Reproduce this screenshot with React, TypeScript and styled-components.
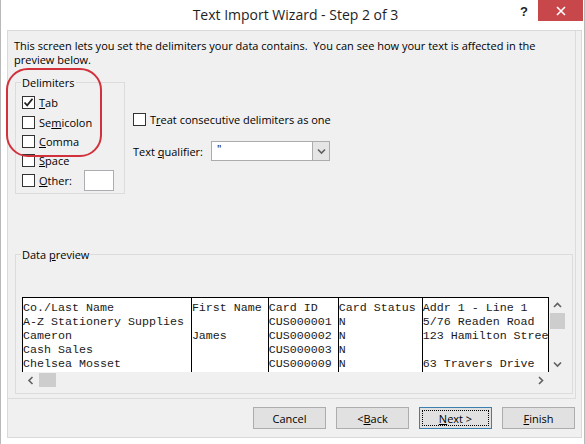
import React from 'react';
import styled, { createGlobalStyle } from 'styled-components';

const GlobalStyle = createGlobalStyle`
  html, body {
    margin: 0;
    padding: 0;
    background: #ffffff;
  }
  body {
    font-family: "Segoe UI", "Open Sans", sans-serif;
    font-size: 11px;
    color: #000000;
  }
`;

const Window = styled.div`
  width: 585px;
  height: 444px;
  box-sizing: border-box;
  display: flex;
  flex-direction: column;
  background: #ffffff;
  border-left: 1px solid #b9b9b9;
  border-right: 1px solid #b9b9b9;
`;

const TitleBar = styled.div`
  flex: none;
  height: 30px;
  display: grid;
  grid-template-columns: 1fr auto 1fr;
`;

const Title = styled.div`
  grid-column: 2;
  padding-left: 6px;
  font-size: 14px;
  line-height: 30px;
  color: #1e1e1e;
`;

const Controls = styled.div`
  grid-column: 3;
  justify-self: end;
  display: flex;
  align-items: flex-start;
  margin-right: 1px;
`;

const HelpButton = styled.div`
  width: 28px;
  height: 21px;
  font-family: "Liberation Sans", sans-serif;
  font-size: 13px;
  font-weight: bold;
  line-height: 24px;
  text-align: center;
  color: #1e1e1e;
`;

const CloseButton = styled.div`
  width: 45px;
  height: 21px;
  display: flex;
  align-items: center;
  justify-content: center;
  background: #c7474b;
`;

const Body = styled.div`
  flex: 1;
  margin: 0 2px 6px 6px;
  display: flex;
  flex-direction: column;
  background: #f0f0f0;
  border: 1px solid #d9d9d9;
`;

const Panel = styled.div`
  position: relative;
  flex: 1;
  display: flex;
  flex-direction: column;
  margin-right: 5px;
  border-right: 1px solid #dcdcdc;
  border-bottom: 1px solid #dcdcdc;
`;

const Intro = styled.p`
  margin: 0;
  padding: 8px 6px 0 6px;
  line-height: 14px;
`;

const OptionsRow = styled.div`
  display: flex;
  align-items: flex-start;
  margin-top: 8px;
  padding-left: 7px;
`;

const Group = styled.fieldset<{ $width: number; $height?: number }>`
  box-sizing: border-box;
  width: ${p => p.$width}px;
  height: ${p => (p.$height ? `${p.$height}px` : 'auto')};
  margin: 0;
  padding: 0 0 0 6px;
  border: 1px solid #dcdcdc;
`;

const GroupLabel = styled.legend`
  padding: 0 1px;
  margin-left: -1px;
  line-height: 15px;
`;

const CheckList = styled.div`
  display: flex;
  flex-direction: column;
  padding-top: 3px;
`;

const CheckRow = styled.label<{ $height?: number }>`
  display: flex;
  align-items: center;
  gap: 4px;
  height: ${p => p.$height ?? 19}px;
`;

const Box = styled.span`
  box-sizing: border-box;
  flex: none;
  width: 13px;
  height: 13px;
  display: flex;
  align-items: center;
  justify-content: center;
  background: #ffffff;
  border: 1px solid #333333;
`;

const OtherLabel = styled.span`
  width: 41px;
`;

const SmallInput = styled.div`
  box-sizing: border-box;
  width: 30px;
  height: 21px;
  background: #ffffff;
  border: 1px solid #abadb3;
`;

const SideColumn = styled.div`
  display: flex;
  flex-direction: column;
  margin-left: 8px;
  padding-top: 35px;
`;

const QualifierRow = styled.div`
  display: flex;
  align-items: center;
  margin-top: 12px;
`;

const QualifierLabel = styled.span`
  width: 78px;
`;

const Combo = styled.div`
  box-sizing: border-box;
  width: 119px;
  height: 20px;
  display: flex;
  background: #ffffff;
  border: 1px solid #acacac;
`;

const ComboValue = styled.span`
  flex: 1;
  padding-left: 5px;
  line-height: 14px;
`;

const ComboButton = styled.span`
  width: 16px;
  display: flex;
  align-items: center;
  justify-content: center;
  background: #e5e5e5;
  border-left: 1px solid #acacac;
`;

const PreviewGroup = styled(Group)`
  margin: auto 0 4px 7px;
  padding: 35px 0 5px 6px;
`;

const Preview = styled.div`
  display: grid;
  grid-template-columns: 527px 17px;
  grid-template-rows: 75px 16px;
`;

const Sheet = styled.div`
  display: flex;
  overflow: hidden;
  background: #ffffff;
  border: 1px solid #000000;
  border-bottom: none;
  font-family: "Liberation Mono", "Courier New", monospace;
  font-size: 11.66px;
  line-height: 14px;
  color: #1a1a1a;
`;

const SheetColumn = styled.div<{ $chars?: number; $first?: boolean }>`
  box-sizing: border-box;
  flex: ${p => (p.$chars ? 'none' : '1')};
  width: ${p => (p.$chars ? `${p.$chars}ch` : 'auto')};
  padding-top: 3px;
  white-space: pre;
  overflow: hidden;
  border-left: ${p => (p.$first ? 'none' : '1px solid #000000')};
`;

const VScroll = styled.div`
  display: flex;
  flex-direction: column;
  align-items: center;
  background: #f0f0f0;
`;

const HScroll = styled.div`
  display: flex;
  align-items: center;
  background: #f0f0f0;
`;

const ArrowCell = styled.div`
  flex: none;
  width: 17px;
  height: 16px;
  display: flex;
  align-items: center;
  justify-content: center;
`;

const VThumb = styled.div`
  width: 15px;
  height: 16px;
  background: #cdcdcd;
`;

const HThumb = styled.div`
  width: 17px;
  height: 14px;
  background: #cdcdcd;
`;

const Spacer = styled.div`
  flex: 1;
`;

const ButtonBar = styled.div`
  flex: none;
  height: 38px;
  box-sizing: border-box;
  display: flex;
  justify-content: flex-end;
  align-items: flex-start;
  gap: 10px;
  padding: 8px 6px 0 0;
`;

const Button = styled.div<{ $default?: boolean }>`
  position: relative;
  box-sizing: border-box;
  width: 73px;
  height: 22px;
  display: flex;
  align-items: center;
  justify-content: center;
  background: #e1e1e1;
  border: 1px solid ${p => (p.$default ? '#3c7fb1' : '#adadad')};

  ${p =>
    p.$default &&
    `
    &::after {
      content: '';
      position: absolute;
      inset: 2px;
      border: 1px dotted #000000;
    }
  `}
`;

/* red marker ring drawn over the delimiter checkboxes */
const Highlight = styled.div`
  position: absolute;
  left: -2px;
  top: 37px;
  width: 96px;
  height: 89px;
  box-sizing: border-box;
  border: 2px solid #d0313b;
  border-radius: 22px;
  pointer-events: none;
`;

const Chevron: React.FC<{ dir: 'up' | 'down' | 'left' | 'right' }> = ({ dir }) => {
  const pts = {
    up: '1,5 4.5,1.5 8,5',
    down: '1,1.5 4.5,5 8,1.5',
    left: '5.5,1 2,4.5 5.5,8',
    right: '2,1 5.5,4.5 2,8',
  }[dir];
  const wide = dir === 'up' || dir === 'down';
  return (
    <svg width={wide ? 9 : 7} height={wide ? 7 : 9} viewBox={wide ? '0 0 9 7' : '0 0 7 9'}>
      <polyline points={pts} fill="none" stroke="#606060" strokeWidth="1.6" />
    </svg>
  );
};

const Check: React.FC<{ checked?: boolean }> = ({ checked }) => (
  <Box>
    {checked && (
      <svg width="11" height="11" viewBox="0 0 11 11">
        <path d="M1.5 5.5 L4.2 8.3 L9.5 1.8" fill="none" stroke="#222222" strokeWidth="1.8" />
      </svg>
    )}
  </Box>
);

const columns: { chars?: number; lines: string[] }[] = [
  { chars: 24, lines: ['Co./Last Name', 'A-Z Stationery Supplies', 'Cameron', 'Cash Sales', 'Chelsea Mosset'] },
  { chars: 11, lines: ['First Name', '', 'James', '', ''] },
  { chars: 10, lines: ['Card ID', 'CUS000001', 'CUS000002', 'CUS000003', 'CUS000009'] },
  { chars: 12, lines: ['Card Status', 'N', 'N', 'N', 'N'] },
  { lines: ['Addr 1 - Line 1', '5/76 Readen Road', '123 Hamilton Street', '', '63 Travers Drive'] },
];

export default function App() {
  return (
    <>
      <GlobalStyle />
      <Window>
        <TitleBar>
          <Title>Text Import Wizard - Step 2 of 3</Title>
          <Controls>
            <HelpButton>?</HelpButton>
            <CloseButton>
              <svg width="10" height="10" viewBox="0 0 10 10">
                <path d="M1 1 L9 9 M9 1 L1 9" stroke="#ffffff" strokeWidth="1.6" />
              </svg>
            </CloseButton>
          </Controls>
        </TitleBar>

        <Body>
          <Panel>
            <Intro>
              This screen lets you set the delimiters your data contains.&nbsp; You can see how your text is affected in the
              preview below.
            </Intro>

            <OptionsRow>
              <Group $width={110} $height={119}>
                <GroupLabel>Delimiters</GroupLabel>
                <CheckList>
                  <CheckRow>
                    <Check checked />
                    <span><u>T</u>ab</span>
                  </CheckRow>
                  <CheckRow $height={20}>
                    <Check />
                    <span>Se<u>m</u>icolon</span>
                  </CheckRow>
                  <CheckRow>
                    <Check />
                    <span><u>C</u>omma</span>
                  </CheckRow>
                  <CheckRow>
                    <Check />
                    <span><u>S</u>pace</span>
                  </CheckRow>
                  <CheckRow $height={21}>
                    <Check />
                    <OtherLabel><u>O</u>ther:</OtherLabel>
                    <SmallInput />
                  </CheckRow>
                </CheckList>
              </Group>

              <SideColumn>
                <CheckRow>
                  <Check />
                  <span>T<u>r</u>eat consecutive delimiters as one</span>
                </CheckRow>
                <QualifierRow>
                  <QualifierLabel>Text <u>q</u>ualifier:</QualifierLabel>
                  <Combo>
                    <ComboValue>"</ComboValue>
                    <ComboButton>
                      <Chevron dir="down" />
                    </ComboButton>
                  </Combo>
                </QualifierRow>
              </SideColumn>
            </OptionsRow>

            <PreviewGroup $width={558}>
              <GroupLabel>Data <u>p</u>review</GroupLabel>
              <Preview>
                <Sheet>
                  {columns.map((col, i) => (
                    <SheetColumn key={i} $chars={col.chars} $first={i === 0}>
                      {col.lines.join('\n')}
                    </SheetColumn>
                  ))}
                </Sheet>
                <VScroll>
                  <ArrowCell><Chevron dir="up" /></ArrowCell>
                  <VThumb />
                  <Spacer />
                  <ArrowCell><Chevron dir="down" /></ArrowCell>
                </VScroll>
                <HScroll>
                  <ArrowCell><Chevron dir="left" /></ArrowCell>
                  <HThumb />
                  <Spacer />
                  <ArrowCell><Chevron dir="right" /></ArrowCell>
                </HScroll>
              </Preview>
            </PreviewGroup>

            <Highlight />
          </Panel>

          <ButtonBar>
            <Button>Cancel</Button>
            <Button>&lt; <u>B</u>ack</Button>
            <Button $default><u>N</u>ext &gt;</Button>
            <Button><u>F</u>inish</Button>
          </ButtonBar>
        </Body>
      </Window>
    </>
  );
}
